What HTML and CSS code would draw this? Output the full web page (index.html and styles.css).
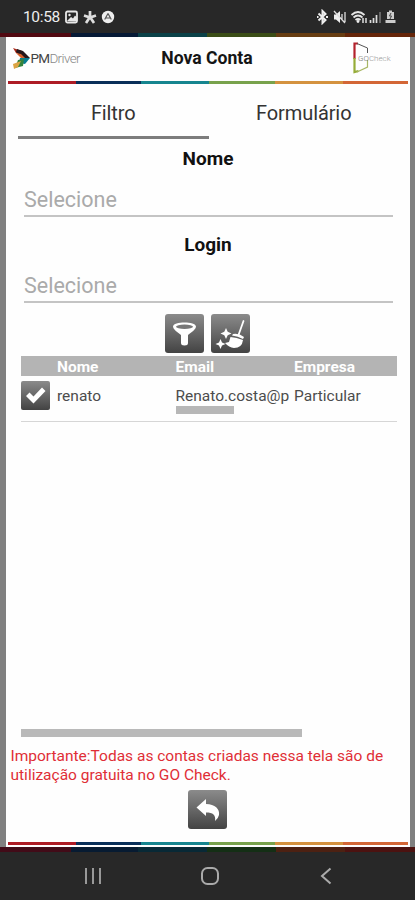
FILE: index.html
```html
<!DOCTYPE html>
<html lang="pt-BR">
<head>
<meta charset="utf-8">
<meta name="viewport" content="width=device-width, initial-scale=1">
<title>Nova Conta</title>
<link rel="stylesheet" href="styles.css">
</head>
<body>
<div class="status">
  <span class="clock">10:58</span>
  <svg class="status-left" width="52" height="16" viewBox="0 0 52 16">
    <rect x="1" y="2.500" width="11" height="11" rx="1.500" fill="none" stroke="#e8e8e8" stroke-width="1.800"/>
    <path d="M2 12l4-4 2 1.500 2-3 2 2v4z" fill="#e8e8e8"/><circle cx="4.500" cy="6" r="1.200" fill="#e8e8e8"/>
    <path d="M25 2v6M19 6.500l6 2 6-2M21 14l4-6 4 6" fill="none" stroke="#ddd" stroke-width="2.700"/>
    <circle cx="43" cy="8" r="6.200" fill="#eee"/>
    <path d="M43 4.500l-3.300 6M43 4.500l3.300 6M40.500 9h5" fill="none" stroke="#555" stroke-width="1.200"/>
  </svg>
  <svg class="status-right" width="82" height="16" viewBox="0 0 82 16">
    <path d="M2.500 4.500l7 6.500-3 3V2l3 3-7 6.500M1 8h1.500M10 8h2" fill="none" stroke="#eee" stroke-width="2"/>
    <path d="M18 5.500h2l4-3.500v12l-4-3.500h-2z" fill="#eee"/><path d="M18 2l11 12M26 5v6M29 3v10" stroke="#ddd" stroke-width="1.300"/>
    <path d="M35.500 6q6.500-6 13 0M37.500 8.500q4.500-4 9 0M39.500 11q2.500-2 5 0" fill="none" stroke="#e5e5e5" stroke-width="1.800"/>
    <circle cx="42" cy="12.500" r="1.400" fill="#eee"/><path d="M47 9v5M50 9v5" stroke="#ddd" stroke-width="1.500"/>
    <path d="M54.500 14v-3M57.500 14V9M60.500 14V6" stroke="#ddd" stroke-width="1.700"/><path d="M64 14V3" stroke="#888" stroke-width="1.300"/>
    <path d="M71 3h2V1.500h3V3h2v7h-7zM69.500 11h10v3h-10z" fill="#ccc"/><path d="M75 4l-1.500 3h2L74 10" fill="none" stroke="#444"/>
  </svg>
</div>
<div class="stripe edge top"><i></i><i></i><i></i><i></i><i></i><i></i></div>
<main class="app">
  <header class="head">
    <div class="pm">
      <svg width="18" height="22" viewBox="0 0 18 22">
        <path d="M0 1L9 4 11 8 3 6z" fill="#a92b1c"/><path d="M4 2l6 2 7 7h-6L3 5z" fill="#26161a"/>
        <path d="M3 6l5 1 4 4H8z" fill="#d8602a"/><path d="M7 11h10l-5 6-6-1z" fill="#087d91"/>
        <path d="M5 13l6-1-1 7-8 2z" fill="#34843c"/><path d="M0 17l8-3-3 6-4 2z" fill="#dba343"/>
      </svg>
      <span class="pm-text">PM<span>Driver</span></span>
    </div>
    <h1>Nova Conta</h1>
    <div class="go">
      <svg width="17" height="32" viewBox="0 0 17 32">
        <path d="M1.500 17V1.500H5" fill="none" stroke="#b3222c" stroke-width="2.200"/>
        <path d="M1.500 16v14l4-1" fill="none" stroke="#96ac38" stroke-width="2.200"/>
        <path d="M4 1.500L14.500 6v5" fill="none" stroke="#555" stroke-width="1"/>
        <path d="M14.500 18v7L4 30" fill="none" stroke="#a8b765" stroke-width="1.200"/>
      </svg>
      <span class="go-text">GO<span>Check</span></span>
    </div>
  </header>
  <div class="stripe inner"><i></i><i></i><i></i><i></i><i></i><i></i></div>
  <nav class="tabs"><div class="tab active">Filtro</div><div class="tab">Formulário</div></nav>
  <section class="field"><h2>Nome</h2><div class="select">Selecione</div></section>
  <section class="field second"><h2>Login</h2><div class="select">Selecione</div></section>
  <div class="actions">
    <div class="btn"><svg width="39" height="39" viewBox="0 0 39 39">
      <path d="M8 12.500C8 7 31 7 31 12.500c0 3-5 6-8 8.500V29q0 2.500-3.500 2.500T16 29v-8c-3-2.500-8-5.500-8-8.500z" fill="#fff"/>
      <ellipse cx="19.500" cy="12.700" rx="8.500" ry="2.200" fill="#777"/></svg></div>
    <div class="btn"><svg width="39" height="39" viewBox="0 0 39 39">
      <path d="M32.500 7l-5 14" stroke="#fff" stroke-width="1.800" stroke-linecap="round"/>
      <path d="M22 20q6-1 11 3l-1 2q-5-3-11-3.500zM19.500 23q6 .5 12.500 3-1 8-9 8-5-.5-9-5l4-1z" fill="#fff"/>
      <path d="M15 14l1.700 3.800 3.800 1.700-3.800 1.700L15 25l-1.700-3.800-3.800-1.700 3.800-1.700zM9.500 25l1.500 3.500 3.500 1.500-3.500 1.500L9.500 35 8 31.500 4.500 30 8 28.500z" fill="#fff"/></svg></div>
  </div>
  <div class="table">
    <div class="row thead"><span></span><span>Nome</span><span>Email</span><span>Empresa</span></div>
    <div class="row body">
      <div class="btn small"><svg width="29" height="29" viewBox="0 0 29 29"><path d="M5 15l3.500-3.500 4 4L21 6.500l3.500 3.500-12 12.500z" fill="#fff"/></svg></div>
      <span>renato</span>
      <div class="mail"><span>Renato.costa@p</span><div class="mail-bar"></div></div>
      <span>Particular</span>
    </div>
  </div>
  <div class="scroll"></div>
  <p class="note"><span>Importante:Todas as contas criadas nessa tela são de</span><span>utilização gratuita no GO Check.</span></p>
  <div class="back"><div class="btn"><svg width="39" height="39" viewBox="0 0 39 39"><path d="M8.500 17.500L18 9v5c9 0 14 5 13 11q-.5 3-4 6c1-6-2-8.500-9-8.500V26z" fill="#fff"/></svg></div></div>
  <div class="stripe inner low"><i></i><i></i><i></i><i></i><i></i><i></i></div>
</main>
<div class="stripe edge bottom"><i></i><i></i><i></i><i></i><i></i><i></i></div>
<div class="nav">
  <svg width="18" height="18" viewBox="0 0 18 18"><path d="M2 1v16M9 1v16M16 1v16" stroke="#999" stroke-width="2"/></svg>
  <svg class="home" width="20" height="20" viewBox="0 0 20 20"><rect x="2" y="2" width="16" height="16" rx="5.500" fill="none" stroke="#aaa" stroke-width="2"/></svg>
  <svg width="12" height="18" viewBox="0 0 12 18"><path d="M10.500 1.500L2 9l8.500 7.500" fill="none" stroke="#aaa" stroke-width="2"/></svg>
</div>
</body>
</html>
```
FILE: styles.css
```css
* { box-sizing: border-box; }
body { margin: 0; width: 415px; height: 900px; overflow: hidden; background: #282828; font-family: Roboto, sans-serif; display: flex; flex-direction: column; }
svg { display: block; flex: none; }
span { white-space: nowrap; }
h1, h2, p { margin: 0; }
.status { height: 33px; flex: none; display: flex; align-items: center; padding: 1px 17px 0 23px; color: #eee; }
.clock { font-size: 15.500px; line-height: 18px; width: 42px; letter-spacing: -.35px; }
.status-right { margin-left: auto; }
.stripe { display: grid; flex: none; grid-template-columns: repeat(6, 1fr); }
.stripe i:nth-child(1) { background: #ad1c25; }
.stripe i:nth-child(2) { background: #092f59; }
.stripe i:nth-child(3) { background: #16858f; }
.stripe i:nth-child(4) { background: #78a24c; }
.stripe i:nth-child(5) { background: #d4923f; }
.stripe i:nth-child(6) { background: #d36636; }
.edge { height: 4px; grid-template-columns: 71px 67px 69px 69px 69px 70px; }
.top i:nth-child(1) { background: #510911; }
.top i:nth-child(2) { background: #061a36; }
.top i:nth-child(3) { background: #0b4148; }
.top i:nth-child(4) { background: #3b4d17; }
.top i:nth-child(5) { background: #673d12; }
.top i:nth-child(6) { background: #652509; }
.bottom { height: 5px; }
.bottom i:nth-child(1) { background: #420b18; }
.bottom i:nth-child(2) { background: #071b32; }
.bottom i:nth-child(3) { background: #082936; }
.bottom i:nth-child(4) { background: #142f15; }
.bottom i:nth-child(5) { background: #4d2112; }
.bottom i:nth-child(6) { background: #4c1210; }
.app { height: 810px; flex: none; background: #fefefe; border-left: 6px solid #808080; border-right: 5px solid #808080; display: flex; flex-direction: column; }
.head { height: 43.500px; flex: none; display: grid; grid-template-columns: 134px 120px 1fr; align-items: center; padding: 0 21px 1px 7px; }
.pm, .go { display: flex; align-items: center; }
.pm-text { font-size: 13.500px; color: #444; letter-spacing: -.7px; font-weight: 400; margin-left: -.5px; }
.pm-text span { font-weight: 300; color: #888; letter-spacing: -.65px; }
h1 { font-size: 17.600px; line-height: 22px; font-weight: 700; color: #151515; text-align: center; white-space: nowrap; }
.go { justify-content: flex-end; padding-right: 1px; }
.go-text { font-size: 8px; color: #777; margin-left: -12px; font-weight: 300; width: 30px; }
.go-text span { color: #999; }
.inner { height: 3.500px; margin: 0 2px; grid-template-columns: 67.500px 65px 68px 66px 68px 1fr; }
.tabs { height: 54.500px; flex: none; display: grid; grid-template-columns: 190.500px 190.500px; padding-left: 12px; }
.tab { text-align: center; font-size: 20px; line-height: 58px; letter-spacing: -.1px; color: #333; }
.active { height: 54.500px; border-bottom: 3px solid #7d7d7d; }
.field { height: 86.500px; flex: none; padding: 9px 12px 0 18px; }
.field h2 { text-align: center; font-size: 19px; line-height: 22px; font-weight: 700; color: #111; margin-left: -6px; }
.select { margin: 10px 5px 0 0; height: 37px; line-height: 40px; border-bottom: 2px solid #c4c4c4; font-size: 21.500px; color: #aaa; font-weight: 400; }
.second { height: 88.500px; }
.actions { display: flex; justify-content: center; gap: 7px; height: 42px; flex: none; padding-right: 1px; }
.btn { width: 39px; height: 39px; border-radius: 3px; background: linear-gradient(#8b8b8b, #606060 60%, #434343); }
.small { width: 29px; height: 29px; border-radius: 2px; }
.table { margin: 0 13px 0 14.500px; flex: none; }
.row { display: grid; grid-template-columns: 36.500px 118.500px 118.500px 1fr; }
.thead { height: 20.500px; background: #b4b4b4; color: #fff; font-weight: 700; font-size: 15.500px; line-height: 22px; }
.body { height: 45.500px; border-bottom: 1.500px solid #d6d6d6; color: #4c4c4c; font-size: 15.500px; padding-top: 4.500px; line-height: 30px; }
.mail-bar { width: 58.500px; height: 8px; background: #b7b7b7; margin-top: -5px; }
.scroll { margin-top: auto; margin-left: 14.500px; width: 281.500px; height: 8px; background: #b9b9b9; flex: none; }
.note { height: 53px; flex: none; padding: 10px 0 0 4.500px; color: #e02e36; font-size: 15.500px; line-height: 19px; }
.note span { display: block; }
.back { height: 52px; flex: none; display: flex; justify-content: center; padding-right: 1px; }
.low { margin-bottom: 2px; }
.nav { height: 48px; flex: none; display: flex; justify-content: space-between; align-items: center; padding: 0 83px 0 84px; }
.home { margin-right: 3px; }
```
